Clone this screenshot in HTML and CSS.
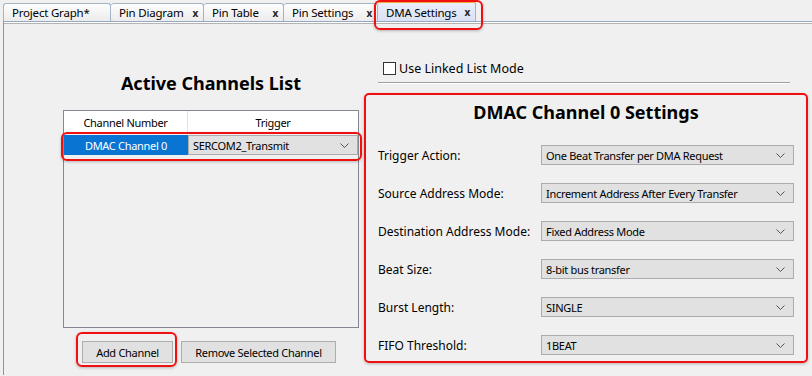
FILE: index.html
```html
<!DOCTYPE html>
<html lang="en">
<head>
  <meta charset="UTF-8" />
  <title>DMA Settings</title>
  <link rel="stylesheet" href="styles.css">
</head>
<body>

  <!-- Editor tabs -->
  <div class="tabs">
    <div class="tab t1">Project Graph*</div>
    <div class="tab t2">Pin Diagram<span class="close">x</span></div>
    <div class="tab t3">Pin Table<span class="close">x</span></div>
    <div class="tab t4">Pin Settings<span class="close">x</span></div>
    <div class="tab t5 active mark">DMA Settings<span class="close">x</span></div>
  </div>

  <div class="content">

    <!-- Channel list -->
    <div class="left">
      <h2 class="title">Active Channels List</h2>
      <div class="table">
        <div class="thead">
          <div class="c1">Channel Number</div>
          <div class="c2">Trigger</div>
        </div>
        <div class="row selected mark">
          <div class="c1">DMAC Channel 0</div>
          <div class="c2">
            <div class="combo">SERCOM2_Transmit<svg class="chev" width="9" height="5" viewBox="0 0 9 5"><polyline points="0.5,0.5 4.5,4.5 8.5,0.5" fill="none" stroke="#555" stroke-width="1"/></svg></div>
          </div>
        </div>
      </div>
      <div class="buttons">
        <button class="btn add mark">Add Channel</button>
        <button class="btn remove">Remove Selected Channel</button>
      </div>
    </div>

    <!-- Channel settings -->
    <div class="right">
      <label class="check"><span class="box"></span>Use Linked List Mode</label>
      <div class="sep"></div>
      <div class="panel">
        <h2 class="title">DMAC Channel 0 Settings</h2>
        <div class="fields">
          <div class="field"><span class="label">Trigger Action:</span><div class="combo">One Beat Transfer per DMA Request<svg class="chev" width="9" height="5" viewBox="0 0 9 5"><polyline points="0.5,0.5 4.5,4.5 8.5,0.5" fill="none" stroke="#555" stroke-width="1"/></svg></div></div>
          <div class="field"><span class="label">Source Address Mode:</span><div class="combo">Increment Address After Every Transfer<svg class="chev" width="9" height="5" viewBox="0 0 9 5"><polyline points="0.5,0.5 4.5,4.5 8.5,0.5" fill="none" stroke="#555" stroke-width="1"/></svg></div></div>
          <div class="field"><span class="label">Destination Address Mode:</span><div class="combo">Fixed Address Mode<svg class="chev" width="9" height="5" viewBox="0 0 9 5"><polyline points="0.5,0.5 4.5,4.5 8.5,0.5" fill="none" stroke="#555" stroke-width="1"/></svg></div></div>
          <div class="field"><span class="label">Beat Size:</span><div class="combo">8-bit bus transfer<svg class="chev" width="9" height="5" viewBox="0 0 9 5"><polyline points="0.5,0.5 4.5,4.5 8.5,0.5" fill="none" stroke="#555" stroke-width="1"/></svg></div></div>
          <div class="field"><span class="label">Burst Length:</span><div class="combo">SINGLE<svg class="chev" width="9" height="5" viewBox="0 0 9 5"><polyline points="0.5,0.5 4.5,4.5 8.5,0.5" fill="none" stroke="#555" stroke-width="1"/></svg></div></div>
          <div class="field"><span class="label">FIFO Threshold:</span><div class="combo">1BEAT<svg class="chev" width="9" height="5" viewBox="0 0 9 5"><polyline points="0.5,0.5 4.5,4.5 8.5,0.5" fill="none" stroke="#555" stroke-width="1"/></svg></div></div>
        </div>
      </div>
    </div>

  </div>

</body>
</html>
```

FILE: styles.css
```css
body { margin: 0; background: #f0f0f0; color: #000; font-family: "Noto Sans", "Open Sans", sans-serif; font-size: 12px; overflow: hidden; height: 376px; }

/* tabs */
.tabs { display: flex; align-items: flex-end; height: 21px; padding-left: 3px; }
.tab { position: relative; box-sizing: border-box; height: 18px; display: flex; align-items: center; padding-left: 8px; border: 1px solid #a3b3c8; border-bottom: none; border-left: none; border-radius: 3px 3px 0 0; background: linear-gradient(#fdfdfd, #ececec); font-size: 11.5px; letter-spacing: -0.2px; white-space: nowrap; }
.tab.t1 { width: 108px; border-left: 1px solid #a3b3c8; }
.tab.t2 { width: 93px; }
.tab.t3 { width: 80px; }
.tab.t4 { width: 94px; }
.tab.t5 { width: 98px; }
.tab .close { margin-left: auto; margin-right: 5px; font-size: 10px; font-weight: bold; color: #222; }
.tab.active { height: 20px; border-top: 2px solid #f2a93b; background: linear-gradient(#e9eef9, #d9e2f4); }

/* red annotation frames */
.mark::after { content: ""; position: absolute; border: 2px solid #f01010; border-radius: 6px; box-shadow: 0 1px 3px rgba(0,0,0,0.25); pointer-events: none; }
.tab.mark::after { left: -4px; right: -8px; top: -3px; bottom: -9px; }
.row.mark::after { left: -3px; right: -4px; top: -3px; bottom: -6px; }
.btn.mark::after { left: -7px; right: -5px; top: -10px; bottom: -5px; }

.content { display: flex; margin-left: 3px; height: 353px; border-left: 1px solid #8497b0; border-top: 1px solid #97a9c2; box-shadow: inset 0 1px 0 #fff, inset 0 2px 0 #b4b4b4; }

.title { margin: 0; font-size: 18px; font-weight: bold; line-height: 22px; text-align: center; }

/* left column */
.left { width: 296px; padding: 50px 0 0 59px; }
.left .title { margin-bottom: 16px; }
.table { box-sizing: border-box; height: 218px; border: 1px solid #828790; background: #f0f0f0; font-size: 11px; letter-spacing: -0.3px; }
.thead { display: flex; height: 22px; background: #fff; border-bottom: 1px solid #f0f0f0; }
.thead .c1 { border-right: 1px solid #e2e2e2; }
.c1 { box-sizing: border-box; width: 124px; display: flex; align-items: center; justify-content: center; }
.c2 { flex: 1; display: flex; align-items: center; justify-content: center; }
.row { position: relative; display: flex; height: 20px; margin-top: 1px; }
.row.selected .c1 { background: #0a74d2; color: #fff; }
.row .c2 .combo { width: 100%; height: 100%; }

.buttons { display: flex; gap: 8px; margin: 13px 0 0 19px; }
.btn { position: relative; box-sizing: border-box; height: 22px; padding: 0; border: 1px solid #adadad; background: #e1e1e1; font-family: inherit; font-size: 11px; letter-spacing: -0.3px; color: #000; }
.btn.add { width: 91px; }
.btn.remove { width: 155px; }

/* right column */
.right { width: 444px; margin-left: 5px; padding-top: 37px; }
.check { display: flex; align-items: center; height: 18px; padding-left: 19px; font-size: 12.5px; }
.check .box { box-sizing: border-box; width: 13px; height: 13px; margin-right: 3px; border: 1px solid #333; background: #fff; }
.sep { margin: 5px 0 0 14px; width: 412px; height: 1px; background: #a0a0a0; border-bottom: 1px solid #fff; }

.panel { margin-top: 9px; box-sizing: border-box; height: 270px; padding: 6px 12px 0 12px; border: 2px solid #f01010; border-radius: 5px; box-shadow: 0 1px 3px rgba(0,0,0,0.25); }
.fields { display: flex; flex-direction: column; gap: 18px; margin-top: 22px; }
.field { display: flex; align-items: center; height: 20px; }
.label { width: 163px; font-size: 12px; }

.combo { position: relative; box-sizing: border-box; width: 253px; height: 20px; display: flex; align-items: center; padding-left: 4px; border: 1px solid #acacac; background: #e1e1e1; font-size: 11px; letter-spacing: -0.3px; white-space: nowrap; }
.combo .chev { position: absolute; right: 8px; top: 7px; }
```
